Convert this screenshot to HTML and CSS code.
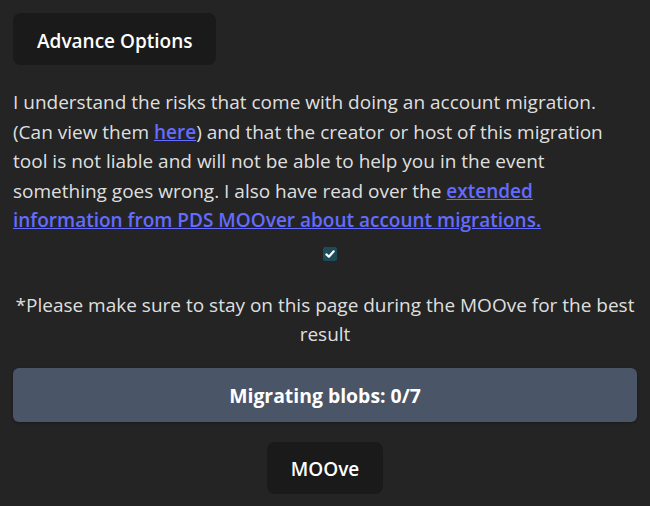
FILE: index.html
```html
<!DOCTYPE html>
<html>
<head>
<meta charset="utf-8">
<link rel="stylesheet" href="styles.css">
</head>
<body>
<div class="page">
  <div class="top"><button class="btn">Advance Options</button></div>
  <p class="terms">I understand the risks that come with doing an account migration. (Can view them <a href="#">here</a>) and that the creator or host of this migration tool is not liable and will not be able to help you in the event something goes wrong. I also have read over the <a href="#">extended information from PDS MOOver about account migrations.</a></p>
  <div class="check-row"><span class="check"><svg viewBox="0 0 14 14" width="14" height="14"><path d="M3.4 7.4 L5.9 9.7 L10.7 4.3" fill="none" stroke="#fff" stroke-width="2.2" stroke-linecap="round" stroke-linejoin="round"/></svg></span></div>
  <p class="note">*Please make sure to stay on this page during the MOOve for the best result</p>
  <div class="progress">Migrating blobs: 0/7</div>
  <div class="bottom"><button class="btn">MOOve</button></div>
</div>
</body>
</html>
```
FILE: styles.css
```css
html, body {
  margin: 0;
  padding: 0;
  background: #242424;
}
body {
  font-family: "Open Sans", "Noto Sans", sans-serif;
  color: rgba(255, 255, 255, 0.87);
}
.page {
  padding: 13px 13px 0 13px;
  display: flex;
  flex-direction: column;
}
.top { display: flex; }
.btn {
  font-family: inherit;
  background: #1a1a1a;
  color: #fff;
  border: none;
  border-radius: 8px;
  height: 52px;
  padding: 3px 24px 0 24px;
  font-size: 19px;
  font-weight: 600;
  cursor: pointer;
}
.terms {
  margin: 23px 0 0 0;
  font-size: 19px;
  line-height: 29.5px;
}
.terms a {
  color: #646cff;
  font-weight: 560;
  text-decoration: underline;
}
.check-row {
  display: flex;
  justify-content: center;
  margin-top: 11px;
  padding-left: 10px;
}
.check {
  width: 14px;
  height: 14px;
  border-radius: 2px;
  background: #1e4b59;
  display: flex;
}
.note {
  margin: 30px 0 0 0;
  text-align: center;
  font-size: 19px;
  line-height: 29.5px;
}
.progress {
  margin-top: 18px;
  height: 54px;
  padding-top: 2px;
  box-sizing: border-box;
  border-radius: 6px;
  background: #4a5568;
  color: #fff;
  font-weight: 700;
  font-size: 19.4px;
  display: flex;
  align-items: center;
  justify-content: center;
  box-shadow: 0 1px 3px rgba(0,0,0,0.3);
}
.bottom {
  display: flex;
  justify-content: center;
  margin-top: 20px;
}
```
